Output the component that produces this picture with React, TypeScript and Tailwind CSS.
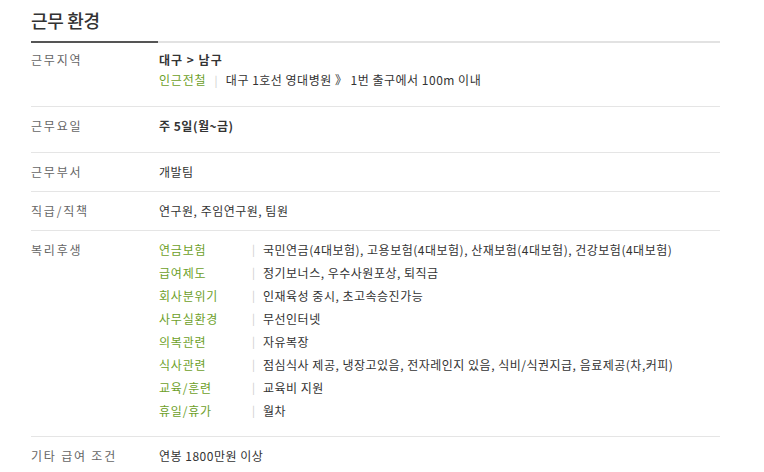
import React from "react";

const font = { fontFamily: '"Noto Sans CJK KR", "Noto Sans", sans-serif' };

const welfare: [string, string][] = [
  ["연금보험", "국민연금(4대보험), 고용보험(4대보험), 산재보험(4대보험), 건강보험(4대보험)"],
  ["급여제도", "정기보너스, 우수사원포상, 퇴직금"],
  ["회사분위기", "인재육성 중시, 초고속승진가능"],
  ["사무실환경", "무선인터넷"],
  ["의복관련", "자유복장"],
  ["식사관련", "점심식사 제공, 냉장고있음, 전자레인지 있음, 식비/식권지급, 음료제공(차,커피)"],
  ["교육/훈련", "교육비 지원"],
  ["휴일/휴가", "월차"],
];

function Row({ label, children, cls }: { label: string; children: React.ReactNode; cls: string }) {
  return (
    <div className={`flex border-b border-[#e5e5e5] ${cls}`}>
      <div className="w-[128px] shrink-0 text-[12px] leading-[20px] text-[#666] tracking-[1.8px]">{label}</div>
      <div className="flex-1 text-[12px] leading-[20px] text-[#333] tracking-[0.5px]">{children}</div>
    </div>
  );
}

export default function App() {
  return (
    <div className="w-[764px] h-[472px] bg-white overflow-hidden" style={font}>
      <div className="ml-[31px] w-[689px]">
        <div className="pt-[8px] pb-[9px] text-[18px] leading-[24px] font-medium text-[#333] tracking-[-0.3px]">근무 환경</div>
        <div className="flex h-[2px]">
          <div className="w-[127px] bg-[#555]" />
          <div className="flex-1 bg-[#e2e2e2]" />
        </div>
        <Row label="근무지역" cls="pt-[7px] pb-[16px]">
          <div className="font-bold tracking-[1px]">대구 &gt; 남구</div>
          <div className="flex items-center">
            <span className="text-[#6e9f2a] tracking-[0.8px]">인근전철</span>
            <span className="mx-[8px] text-[#ccc] text-[11px]">|</span>
            <span>대구 1호선 영대병원 》 1번 출구에서 100m 이내</span>
          </div>
        </Row>
        <Row label="근무요일" cls="pt-[9px] pb-[16px]">
          <span className="font-bold">주 5일(월~금)</span>
        </Row>
        <Row label="근무부서" cls="py-[9px]">개발팀</Row>
        <Row label="직급/직책" cls="py-[9px]">연구원, 주임연구원, 팀원</Row>
        <div className="flex border-b border-[#e5e5e5] pt-[7px] pb-[14px]">
          <div className="w-[128px] shrink-0 text-[12px] leading-[23px] text-[#666] tracking-[1.8px]">복리후생</div>
          <div className="flex-1 flex flex-col">
            {welfare.map(([k, v]) => (
              <div key={k} className="flex items-center text-[12px] leading-[23px]">
                <span className="w-[93px] shrink-0 text-[#6e9f2a] tracking-[0.8px]">{k}</span>
                <span className="text-[#ccc] text-[11px] w-[11px]">|</span>
                <span className="text-[#333] tracking-[0.5px]">{v}</span>
              </div>
            ))}
          </div>
        </div>
        <div className="flex pt-[9px]">
          <div className="w-[128px] shrink-0 text-[12px] leading-[20px] text-[#666] tracking-[1.8px]">기타 급여 조건</div>
          <div className="flex-1 text-[12px] leading-[20px] text-[#333] tracking-[0.5px]">연봉 1800만원 이상</div>
        </div>
      </div>
    </div>
  );
}
